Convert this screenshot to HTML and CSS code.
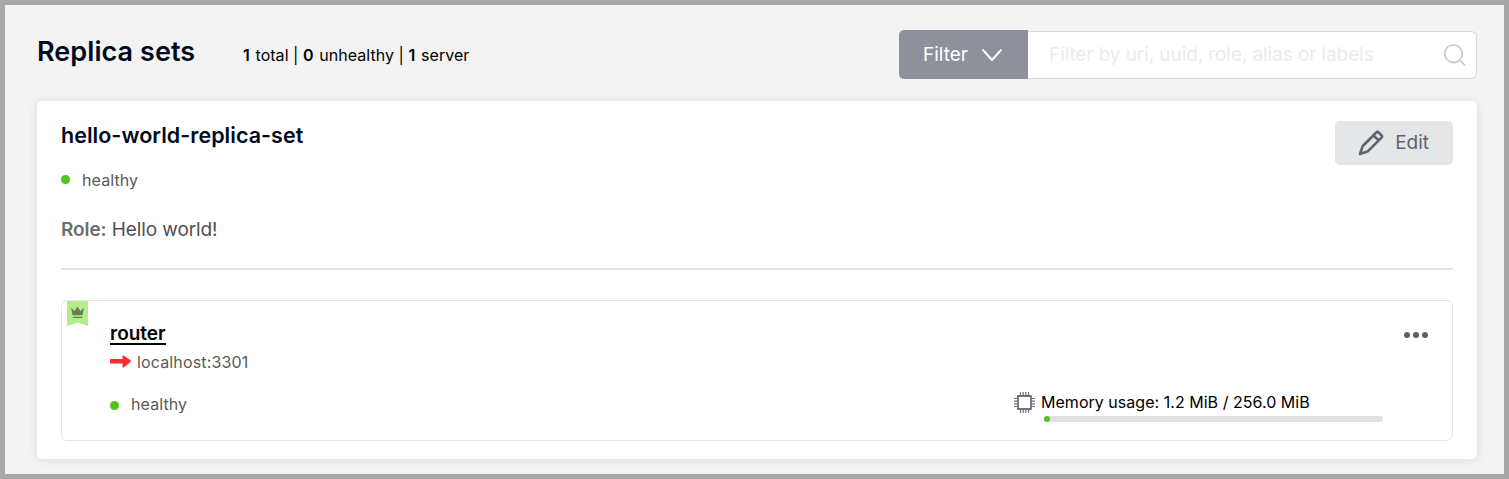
FILE: index.html
```html
<!DOCTYPE html>
<html lang="en">
<head>
<meta charset="utf-8">
<title>Replica sets</title>
<link rel="stylesheet" href="styles.css">
</head>
<body>
<main class="page">
  <header class="header">
    <h1 class="title">Replica sets</h1>
    <p class="summary"><b>1</b> total | <b>0</b> unhealthy | <b>1</b> server</p>
    <div class="search">
      <button class="filter-button"><span>Filter</span>
        <svg class="chevron" width="22" height="14" viewBox="0 0 22 14"><path d="M1.5 1.5 11 12 20.5 1.5" fill="none" stroke="#fff" stroke-width="1.9"/></svg>
      </button>
      <div class="search-field">
        <span class="placeholder">Filter by uri, uuid, role, alias or labels</span>
        <svg width="24" height="24" viewBox="0 0 24 24" fill="none" stroke="#cbcbcd" stroke-width="1.8"><circle cx="10.5" cy="10.7" r="8.8"/><path d="M16.6 16.8 22 22.4"/></svg>
      </div>
    </div>
  </header>

  <section class="card">
    <div class="card-head">
      <h2 class="set-name">hello-world-replica-set</h2>
      <button class="edit-button">
        <svg width="26" height="26" viewBox="0 0 26 26" fill="none" stroke="#5f636f" stroke-width="2.6" stroke-linejoin="round"><path d="M2 24 4.8 16 18.3 2.5Q19.5 1.4 20.7 2.5L23.5 5.3Q24.6 6.5 23.5 7.7L10 21.2ZM15.5 5.3 20.7 10.5"/></svg>
        <span>Edit</span>
      </button>
    </div>
    <p class="status set-status"><i class="dot"></i>healthy</p>
    <p class="role"><b>Role:</b> Hello world!</p>
    <article class="server">
      <svg class="leader-flag" width="21" height="25" viewBox="0 0 21 25"><path d="M0 0H21V25L10.5 21.5 0 25Z" fill="#b5ec8e"/><path d="M4 6.7 7.6 10 10.5 5.5 13.4 10 17 6.7 15.5 14.3H5.5ZM5.8 15.7H15.2V17H5.8Z" fill="#657f4e"/></svg>
      <div class="server-info">
        <a class="server-name">router</a>
        <p class="server-uri">
          <svg width="22" height="14" viewBox="0 0 22 14"><path d="M0 4H12.5V1.6Q12.5 0 14 .8L20.5 5.3Q21.5 6.2 20.5 7.1L14 12.2Q12.5 13 12.5 11.4V8.4H0Z" fill="#ff2b2f"/></svg>
          localhost:3301
        </p>
        <p class="status"><i class="dot"></i>healthy</p>
      </div>
      <div class="memory">
        <svg width="21" height="21" viewBox="0 0 21 21" fill="none" stroke="#6f727d"><path d="M4 4H17V17H4Z" stroke-width="1.8" stroke-linejoin="round"/><path d="M6.5 0V4M9.2 0V4M11.8 0V4M14.5 0V4M6.5 17V21M9.2 17V21M11.8 17V21M14.5 17V21M0 6.5H4M0 9.2H4M0 11.8H4M0 14.5H4M17 6.5H21M17 9.2H21M17 11.8H21M17 14.5H21" stroke-width="1.2"/></svg>
        <div class="memory-body">
          <p class="memory-label">Memory usage: 1.2 MiB / 256.0 MiB</p>
          <div class="bar"><div class="bar-value"></div></div>
        </div>
      </div>
      <svg class="more" width="24" height="6" viewBox="0 0 24 6" fill="#5a5e6b"><circle cx="3" cy="3" r="3"/><circle cx="12" cy="3" r="3"/><circle cx="21" cy="3" r="3"/></svg>
    </article>
  </section>
</main>
</body>
</html>
```
FILE: styles.css
```css
* { box-sizing: border-box; }
body {
  margin: 0;
  font-family: Inter, "Liberation Sans", sans-serif;
  font-size: 16px;
  color: #000;
}
h1, h2, p { margin: 0; }
b { font-weight: 600; }
svg { display: block; flex: none; }
button { border: 0; font: inherit; display: flex; align-items: center; }
.page {
  height: 479px;
  border: 5px solid #a8a8a8;
  background: #f3f3f3;
  padding: 25px 27px 0 32px;
  overflow: hidden;
}
.header { display: flex; height: 71px; align-items: flex-start; white-space: nowrap; }
.title { width: 206px; font-size: 27px; line-height: 44px; font-weight: 600; color: #000a1e; letter-spacing: .06px; }
.summary { line-height: 50px; }
.summary b { letter-spacing: 1.2px; }
.summary { letter-spacing: .04px; }
.search { display: flex; width: 578px; height: 49px; margin-left: auto; font-size: 19px; }
.filter-button {
  width: 129px;
  padding: 0 25px 0 24px;
  justify-content: space-between;
  background: #8e919a;
  color: #fff;
  border-radius: 5px 0 0 5px;
}
.search-field {
  flex: 1;
  height: 48px;
  margin-top: 1px;
  padding: 0 9px 0 21px;
  display: flex;
  align-items: center;
  justify-content: space-between;
  background: #fff;
  border: 1px solid #d7d8dc;
  border-left: 0;
  border-radius: 0 6px 6px 0;
}
.placeholder { color: #ececed; padding-bottom: 2px; letter-spacing: -.09px; }
.card {
  height: 358px;
  padding: 20px 24px 0;
  background: #fff;
  border-radius: 5px;
  box-shadow: 0 1px 10px rgba(0, 0, 0, .11);
}
.card-head { display: flex; justify-content: space-between; height: 47px; }
.set-name { font-size: 21.5px; line-height: 28px; font-weight: 600; color: #000a1e; letter-spacing: .03px; }
.edit-button {
  width: 118px;
  height: 44px;
  padding: 0 24px 1px 23px;
  justify-content: space-between;
  border-radius: 5px;
  background: #e5e6e8;
  color: #5f636f;
  font-size: 19px;
}
.status { display: flex; align-items: center; gap: 12px; line-height: 24px; color: #595959; letter-spacing: .1px; }
.dot { width: 9px; height: 9px; border-radius: 50%; background: #52c41a; }
.set-status .dot { margin-bottom: 2px; }
.role {
  height: 78px;
  padding-top: 24px;
  border-bottom: 2px solid #e4e4e4;
  font-size: 19px;
  line-height: 28px;
  color: #505050;
  letter-spacing: -.1px;
}
.role b { color: #6e6e6e; }
.server {
  position: relative;
  display: flex;
  height: 141px;
  margin-top: 30px;
  padding: 0 24px 0 48px;
  border: 1px solid #e6e6e6;
  border-radius: 6px;
}
.leader-flag { position: absolute; left: 5px; top: 0; }
.server-info { flex: 1; padding-top: 22px; }
.server-info .dot { margin-top: 2px; }
.server-name {
  display: inline-block;
  height: 22px;
  line-height: 21px;
  border-bottom: 2px solid #000;
  font-size: 19px;
  font-weight: 600;
}
.server-uri {
  display: flex;
  align-items: center;
  gap: 5px;
  height: 47px;
  padding-bottom: 14px;
  color: #595959;
  letter-spacing: .15px;
}
.memory { display: flex; width: 369px; gap: 6px; margin: 91px 21px 0 0; }
.memory-body { flex: 1; }
.memory-label { line-height: 20px; letter-spacing: .03px; }
.bar { height: 6px; margin: 4px 0 0 3px; border-radius: 3px; background: #e0e0e0; }
.bar-value { width: 6px; height: 6px; border-radius: 3px; background: #52c41a; }
.more { margin-top: 31px; }
```
